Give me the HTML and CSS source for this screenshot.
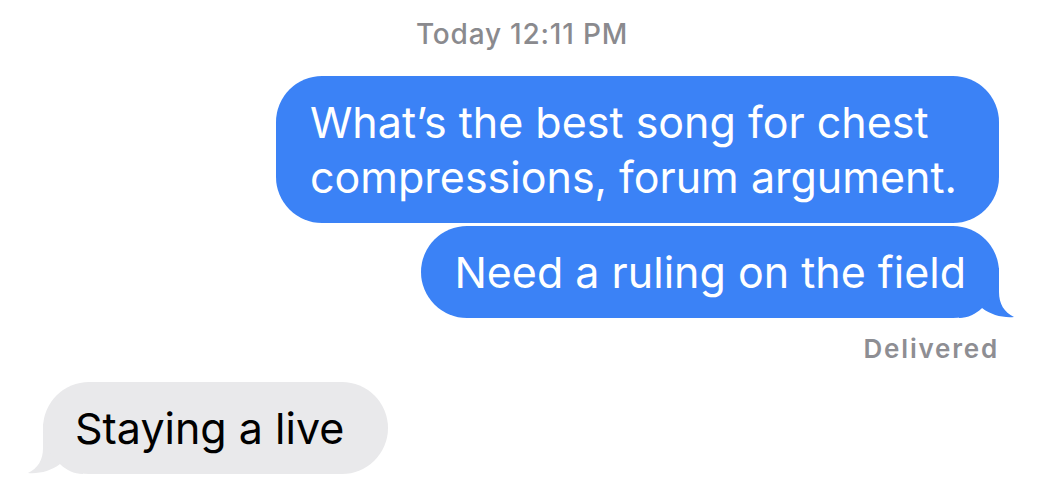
FILE: index.html
```
<!DOCTYPE html>
<html>

<head>
    <meta charset="UTF-8">
    <meta name="viewport" content="width=device-width,initial-scale=1">
    <link rel="stylesheet" href="styles.css">
    <title>Messages</title>
</head>

<body>
    <div class="thread">
        <div class="timestamp">Today 12:11 PM</div>

        <div class="row row-sent row-first">
            <div class="bubble bubble-sent bubble-wide">What’s the best song for chest compressions, forum argument.</div>
        </div>
        <div class="row row-sent">
            <div class="bubble bubble-sent">
                Need a ruling on the field
                <svg class="tail tail-sent" width="56" height="50" viewBox="0 0 56 50">
                    <path d="M0 0 H40 V24 C40 36 45 44 55 49 C44 50 32 47 23 40 C17 46 9 50 0 50 Z" fill="#3b82f6" />
                </svg>
            </div>
        </div>
        <div class="status">Delivered</div>

        <div class="row row-received">
            <div class="bubble bubble-received">
                Staying a live
                <svg class="tail tail-received" width="56" height="50" viewBox="0 0 56 50">
                    <path d="M56 0 H16 V24 C16 36 11 44 1 49 C12 50 24 47 33 40 C39 46 47 50 56 50 Z" fill="#e9e9eb" />
                </svg>
            </div>
        </div>
    </div>
</body>

</html>
```

FILE: styles.css
```
*,
*::before,
*::after {
    box-sizing: border-box;
    padding: 0;
    margin: 0;
}

body {
    background: #fff;
    font-family: Inter, "Noto Sans", sans-serif;
    overflow: hidden;
}

.thread {
    display: flex;
    flex-direction: column;
    padding: 18px 44px 0 43px;
}

.timestamp {
    text-align: center;
    font-size: 28px;
    font-weight: 500;
    letter-spacing: 0.8px;
    line-height: 32px;
    color: #8a8a8e;
    padding-left: 2px;
}

.row {
    display: flex;
}

.row-sent {
    justify-content: flex-end;
    margin-top: 3px;
}

.row-sent.row-first {
    margin-top: 26px;
}

.row-received {
    justify-content: flex-start;
}

.bubble {
    position: relative;
    font-size: 43px;
    line-height: 55px;
    padding: 19px 33px 18px;
    border-radius: 46px;
}

.bubble-wide {
    max-width: 723px;
    padding-left: 34px;
}

.bubble-sent {
    background: #3b82f6;
    color: #fff;
}

.bubble-received {
    background: #e9e9eb;
    color: #000;
    padding-left: 32px;
    padding-right: 44px;
}

/* tail sits behind the bubble so it never covers the text */
.tail {
    position: absolute;
    bottom: 0;
    z-index: -1;
}

.tail-sent {
    right: -16px;
}

.tail-received {
    left: -16px;
}

.status {
    text-align: right;
    font-size: 26px;
    font-weight: 600;
    letter-spacing: 1.8px;
    color: #8e8e93;
    line-height: 30px;
    margin-top: 16px;
    margin-bottom: 18px;
}
```
